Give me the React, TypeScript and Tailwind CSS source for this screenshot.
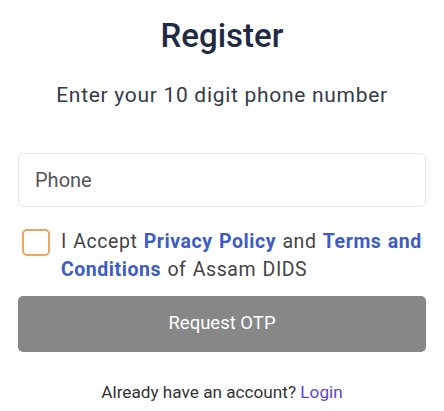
import React from 'react';

const App: React.FC = () => {
  return (
    <div className="w-[444px] h-[411px] bg-white px-[18px] font-['Roboto',sans-serif] overflow-hidden">
      <h1 className="pt-[15px] text-center text-[33px] leading-[42px] font-medium text-[#1f2a44]">Register</h1>
      <p className="mt-[25px] text-center text-[21px] leading-[26px] tracking-[0.7px] text-[#333b48]">
        Enter your 10 digit phone number
      </p>

      <div className="mt-[45px] h-[54px] rounded-[5px] border border-[#e6e6e6] flex items-center px-[16px]">
        <span className="text-[20px] text-[#555555]">Phone</span>
      </div>

      <div className="mt-[21px] flex items-start gap-[11px] pl-[4px]">
        <div className="mt-[1px] w-[28px] h-[27px] shrink-0 rounded-[5px] border-2 border-[#eda561]" />
        <p className="text-[19.5px] leading-[28px] text-[#444444] tracking-[0.55px] [word-spacing:1px]">
          I Accept <span className="font-bold text-[#3d5cc4]">Privacy Policy</span> and{' '}
          <span className="font-bold text-[#3d5cc4]">Terms and Conditions</span> of Assam DIDS
        </p>
      </div>

      <button className="mt-[12px] w-full h-[56px] rounded-[5px] bg-[#878787] text-white text-[18.5px] font-normal">
        Request OTP
      </button>

      <p className="mt-[28px] text-center text-[17.2px] text-[#333333]">
        Already have an account? <span className="text-[#5b45d4]">Login</span>
      </p>
    </div>
  );
};

export default App;
